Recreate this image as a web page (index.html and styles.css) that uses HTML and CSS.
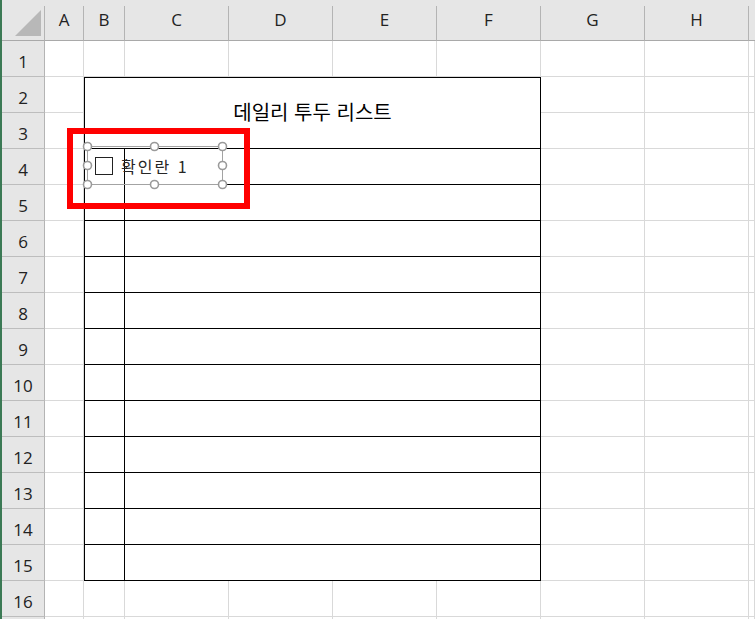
FILE: index.html
```html
<!DOCTYPE html>
<html lang="ko">
<head>
<meta charset="utf-8">
<title>데일리 투두 리스트</title>
<link rel="stylesheet" href="styles.css">
</head>
<body>
<div class="sheet">
  <div class="corner"><span class="tri"></span></div>
  <div class="ch">A</div><div class="ch">B</div><div class="ch">C</div><div class="ch">D</div><div class="ch">E</div><div class="ch">F</div><div class="ch">G</div><div class="ch">H</div><div class="ch tail"></div>

  <div class="todo">
    <div class="title">데일리 투두 리스트</div>
    <div class="chk"></div><div class="task"></div>
    <div class="chk"></div><div class="task"></div>
    <div class="chk"></div><div class="task"></div>
    <div class="chk"></div><div class="task"></div>
    <div class="chk"></div><div class="task"></div>
    <div class="chk"></div><div class="task"></div>
    <div class="chk"></div><div class="task"></div>
    <div class="chk"></div><div class="task"></div>
    <div class="chk"></div><div class="task"></div>
    <div class="chk"></div><div class="task"></div>
    <div class="chk"></div><div class="task"></div>
    <div class="chk"></div><div class="task"></div>
  </div>

  <div class="rh">1</div><div class="c"></div><div class="c"></div><div class="c"></div><div class="c"></div><div class="c"></div><div class="c"></div><div class="c"></div><div class="c"></div><div class="c"></div>
  <div class="rh">2</div><div class="c"></div><div class="c"></div><div class="c"></div><div class="c"></div>
  <div class="rh">3</div><div class="c"></div><div class="c"></div><div class="c"></div><div class="c"></div>
  <div class="rh">4</div><div class="c"></div><div class="c"></div><div class="c"></div><div class="c"></div>
  <div class="rh">5</div><div class="c"></div><div class="c"></div><div class="c"></div><div class="c"></div>
  <div class="rh">6</div><div class="c"></div><div class="c"></div><div class="c"></div><div class="c"></div>
  <div class="rh">7</div><div class="c"></div><div class="c"></div><div class="c"></div><div class="c"></div>
  <div class="rh">8</div><div class="c"></div><div class="c"></div><div class="c"></div><div class="c"></div>
  <div class="rh">9</div><div class="c"></div><div class="c"></div><div class="c"></div><div class="c"></div>
  <div class="rh">10</div><div class="c"></div><div class="c"></div><div class="c"></div><div class="c"></div>
  <div class="rh">11</div><div class="c"></div><div class="c"></div><div class="c"></div><div class="c"></div>
  <div class="rh">12</div><div class="c"></div><div class="c"></div><div class="c"></div><div class="c"></div>
  <div class="rh">13</div><div class="c"></div><div class="c"></div><div class="c"></div><div class="c"></div>
  <div class="rh">14</div><div class="c"></div><div class="c"></div><div class="c"></div><div class="c"></div>
  <div class="rh">15</div><div class="c"></div><div class="c"></div><div class="c"></div><div class="c"></div>
  <div class="rh">16</div><div class="c"></div><div class="c"></div><div class="c"></div><div class="c"></div><div class="c"></div><div class="c"></div><div class="c"></div><div class="c"></div><div class="c"></div>
  <div class="rh"></div><div class="c"></div><div class="c"></div><div class="c"></div><div class="c"></div><div class="c"></div><div class="c"></div><div class="c"></div><div class="c"></div><div class="c"></div>
</div>

<div class="control">
  <svg class="frame" width="146" height="49" viewBox="0 0 146 49">
    <rect x="5.5" y="5.5" width="135" height="38" fill="none" stroke="#a3a3a3" stroke-width="1"/>
    <g fill="#fff" stroke="#9a9a9a" stroke-width="1.6">
      <circle cx="5.5" cy="5.5" r="4"/>
      <circle cx="72.5" cy="5.5" r="4"/>
      <circle cx="140.5" cy="5.5" r="4"/>
      <circle cx="5.5" cy="24.5" r="4"/>
      <circle cx="140.5" cy="24.5" r="4"/>
      <circle cx="5.5" cy="43.5" r="4"/>
      <circle cx="72.5" cy="43.5" r="4"/>
      <circle cx="140.5" cy="43.5" r="4"/>
    </g>
  </svg>
  <span class="box"></span>
  <span class="label">확인란 1</span>
</div>

<div class="annot"></div>
</body>
</html>
```

FILE: styles.css
```css
* { box-sizing: border-box; }

html, body {
  margin: 0;
  height: 100%;
}

body {
  font-family: "Noto Sans CJK KR", "Noto Sans", sans-serif;
  background: #fff;
  overflow: hidden;
}

.sheet {
  display: grid;
  grid-template-columns: 43px 39px 41px 104px 104px 104px 104px 104px 104px 1fr;
  grid-template-rows: 41px repeat(16, 36px) 1fr;
  height: 619px;
  background: #e6e6e6;
  border-left: 2px solid #3c7a55;
}

/* column headers */
.corner,
.ch {
  align-self: end;
  height: 35px;
  border-right: 1px solid #b4b4b4;
  border-bottom: 1px solid #a9a9a9;
}

.ch {
  display: flex;
  align-items: center;
  justify-content: center;
  padding-bottom: 8px;
  font-family: "Open Sans", "Noto Sans", sans-serif;
  font-size: 17px;
  color: #222;
}

.ch.tail { border-right: none; }

.tri {
  display: block;
  width: 26px;
  height: 26px;
  margin: 4px 0 0 13px;
  background: #b8b8b8;
  clip-path: polygon(100% 0, 100% 100%, 0 100%);
}

/* row headers */
.rh {
  display: flex;
  align-items: center;
  justify-content: center;
  padding-top: 5px;
  border-right: 1px solid #b4b4b4;
  border-bottom: 1px solid #bdbdbd;
  font-family: "Open Sans", "Noto Sans", sans-serif;
  font-size: 17px;
  color: #222;
}

/* plain cells */
.c {
  background: #fff;
  border-right: 1px solid #d9d9d9;
  border-bottom: 1px solid #d9d9d9;
}

/* the to-do table (B2:F15) */
.todo {
  grid-column: 3 / 8;
  grid-row: 3 / 17;
  display: grid;
  grid-template-columns: 40px 1fr;
  grid-template-rows: 71px repeat(12, 36px);
  background: #fff;
  border: 1px solid #000;
  border-bottom: none;
}

.title {
  grid-column: 1 / -1;
  display: flex;
  align-items: center;
  justify-content: center;
  padding-bottom: 4px;
  border-bottom: 1px solid #000;
  font-size: 20px;
  color: #000;
}

.chk {
  border-right: 1px solid #000;
  border-bottom: 1px solid #000;
}

.task {
  border-bottom: 1px solid #000;
}

/* floating form control (checkbox) */
.control {
  position: absolute;
  left: 87px;
  top: 146px;
  width: 136px;
  height: 39px;
  display: flex;
  align-items: center;
  gap: 8px;
  padding-left: 8px;
}

.frame {
  position: absolute;
  left: -5px;
  top: -5px;
  overflow: visible;
}

.box {
  position: relative;
  width: 18px;
  height: 18px;
  border: 1px solid #222;
  background: #fff;
}

.label {
  position: relative;
  font-size: 16px;
  letter-spacing: 2px;
  color: #262626;
}

/* red annotation rectangle */
.annot {
  position: absolute;
  left: 67px;
  top: 128px;
  width: 183px;
  height: 81px;
  border: 6px solid #ff0000;
}
```
